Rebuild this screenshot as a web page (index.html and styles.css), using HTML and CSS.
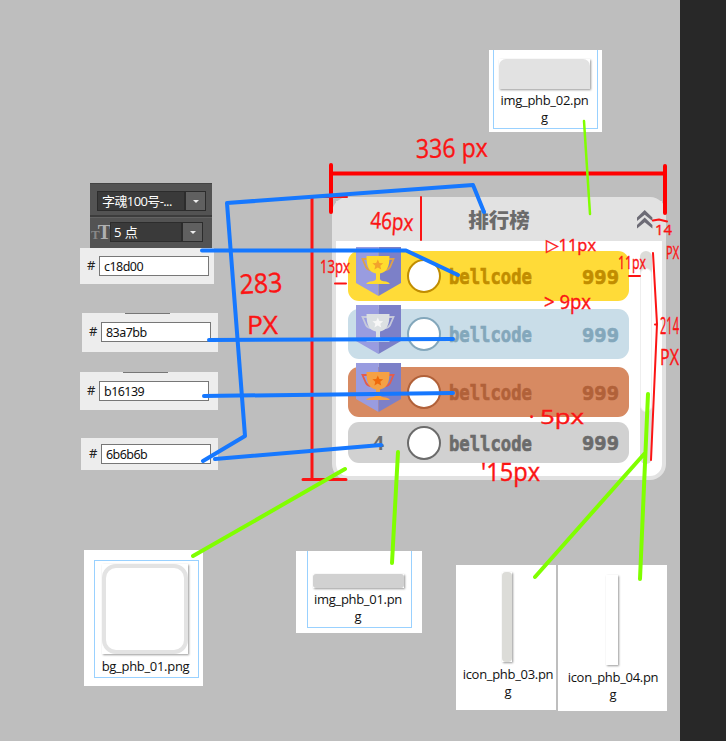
FILE: index.html
```html
<!DOCTYPE html>
<html lang="zh">
<head>
<meta charset="utf-8">
<title>排行榜</title>
<link rel="stylesheet" href="styles.css">
</head>
<body>
<main class="canvas">
  <svg class="defs" width="0" height="0">
    <symbol id="ribbon" viewBox="0 0 45 49">
      <path d="M0 0H22.5V49L0 36Z" fill="#999ce0"/>
      <path d="M22.5 0H45V36L22.5 49Z" fill="#7c80c8"/>
    </symbol>
    <symbol id="cup" viewBox="0 0 45 49">
      <path class="handle" d="M12 12H6.500L10 20Q11.500 23 15 23M32 12H37.500L34 20Q32.500 23 29 23" fill="none" stroke-width="1.800"/>
      <path class="bowl" d="M10.500 9H33.500C33.500 20 31 25 24 26.500V32Q24.500 34 30 34.500Q33 35 34 37H10Q11 35 14 34.500Q19.500 34 20 32V26.500C13 25 10.500 20 10.500 9Z"/>
      <path class="star" d="M21.800 12.500L23.400 16L27.200 16.300L24.300 18.800L25.200 22.500L21.800 20.500L18.400 22.500L19.300 18.800L16.400 16.300L20.200 16Z"/>
    </symbol>
  </svg>

  <section class="type-options">
    <div class="option"><span class="field font-name">字魂100号-...</span><span class="drop"></span></div>
    <div class="option size"><span class="tt"><small>T</small>T</span><span class="field">5 点</span><span class="drop"></span></div>
  </section>

  <div class="hex hex-gold"><span>#</span><b>c18d00</b></div>
  <div class="hex hex-blue"><span>#</span><b>83a7bb</b></div>
  <div class="hex hex-rust"><span>#</span><b>b16139</b></div>
  <div class="hex hex-grey"><span>#</span><b>6b6b6b</b></div>

  <section class="panel">
    <header class="head"><h1>排行榜</h1>
      <svg class="chevrons" width="16" height="19" viewBox="0 0 16 19"><path d="M0 7.500L7.700 0L15.400 7.500V11L7.700 4.800L0 11ZM0 15L7.700 7.500L15.400 15V18.500L7.700 12.300L0 18.500Z" fill="#6c6b75"/></svg>
    </header>
    <div class="body">
      <div class="rows">
        <div class="row gold">
          <svg class="medal" width="45" height="49"><use href="#ribbon"/><use href="#cup"/></svg><i class="avatar"></i>
          <svg class="label" width="180" height="26"><text x="0" y="20" font-size="22" textLength="83" lengthAdjust="spacingAndGlyphs">bellcode</text><text x="133" y="20" font-size="20" textLength="37" lengthAdjust="spacingAndGlyphs">999</text></svg>
        </div>
        <div class="row silver">
          <svg class="medal" width="45" height="49"><use href="#ribbon"/><use href="#cup"/></svg><i class="avatar"></i>
          <svg class="label" width="180" height="26"><text x="0" y="20" font-size="22" textLength="83" lengthAdjust="spacingAndGlyphs">bellcode</text><text x="133" y="20" font-size="20" textLength="37" lengthAdjust="spacingAndGlyphs">999</text></svg>
        </div>
        <div class="row bronze">
          <svg class="medal" width="45" height="49"><use href="#ribbon"/><use href="#cup"/></svg><i class="avatar"></i>
          <svg class="label" width="180" height="26"><text x="0" y="20" font-size="22" textLength="83" lengthAdjust="spacingAndGlyphs">bellcode</text><text x="133" y="20" font-size="20" textLength="37" lengthAdjust="spacingAndGlyphs">999</text></svg>
        </div>
        <div class="row plain">
          <span class="rank">4</span><i class="avatar"></i>
          <svg class="label" width="180" height="26"><text x="0" y="20" font-size="22" textLength="83" lengthAdjust="spacingAndGlyphs">bellcode</text><text x="133" y="19" font-size="20" textLength="37" lengthAdjust="spacingAndGlyphs">999</text></svg>
        </div>
      </div>
      <div class="track"><div class="thumb"></div></div>
    </div>
  </section>

  <figure class="file file-head"><div class="frame"><div class="thumbnail"><i></i></div><figcaption>img_phb_02.pn<br>g</figcaption></div></figure>
  <figure class="file file-bg"><div class="frame"><div class="thumbnail"><i></i></div><figcaption>bg_phb_01.png</figcaption></div></figure>
  <figure class="file file-row"><div class="frame"><div class="thumbnail"><i></i></div><figcaption>img_phb_01.pn<br>g</figcaption></div></figure>
  <figure class="file file-track"><div class="thumbnail"><i></i></div><figcaption>icon_phb_03.pn<br>g</figcaption></figure>
  <figure class="file file-thumb"><div class="thumbnail"><i></i></div><figcaption>icon_phb_04.pn<br>g</figcaption></figure>

  <svg class="notes" width="680" height="741" viewBox="0 0 680 741">
    <g class="red">
      <path class="thick" d="M331 173.500H665M331 165V212M665 166V213"/>
      <path class="mid" d="M312 197V478M303 479.500H346"/>
      <path d="M300 197H347M421 197V240M335 283.500H346M629 276H640M653 220.500L659 219.500L667 221.500M653 253L657 324L651 460M655 324.500H657"/>
    </g>
    <g class="blue">
      <path d="M202 250.500H406L458 275"/>
      <path d="M209 340L453 339"/>
      <path d="M204 396L453 393"/>
      <path d="M484 212L473 185L227 203L245 436L203 461"/>
      <path d="M215 459L381 445"/>
    </g>
    <g class="green">
      <path d="M193 556L345 469M398 452L392 563M645 453L535 577M648 394L640 579"/>
      <path class="fine" d="M584 121L590 214"/>
    </g>
    <g class="ink">
      <text x="416" y="158" font-size="26" textLength="72" lengthAdjust="spacingAndGlyphs" transform="rotate(-1 416 158)">336 px</text>
      <text x="370" y="228" font-size="23" textLength="43" lengthAdjust="spacingAndGlyphs" transform="rotate(4 370 228)">46px</text>
      <text x="240" y="294" font-size="27" textLength="43" lengthAdjust="spacingAndGlyphs" transform="rotate(-3 240 294)">283</text>
      <text x="247" y="334" font-size="25" textLength="31" lengthAdjust="spacingAndGlyphs">PX</text>
      <text x="320" y="273" font-size="18" textLength="30" lengthAdjust="spacingAndGlyphs">13px</text>
      <text x="546" y="251" font-size="17" textLength="50" lengthAdjust="spacingAndGlyphs">▷11px</text>
      <text x="618" y="269" font-size="19" textLength="28" lengthAdjust="spacingAndGlyphs">11px</text>
      <text x="544" y="309" font-size="20" textLength="47" lengthAdjust="spacingAndGlyphs">&gt; 9px</text>
      <text x="529" y="424" font-size="20"><tspan>·</tspan><tspan x="540" textLength="44" lengthAdjust="spacingAndGlyphs">5px</tspan></text>
      <text x="481" y="481" font-size="25" textLength="59" lengthAdjust="spacingAndGlyphs">'15px</text>
      <text x="655" y="235" font-size="15" textLength="17" lengthAdjust="spacingAndGlyphs">14</text>
      <text x="666" y="259" font-size="18" textLength="13" lengthAdjust="spacingAndGlyphs">PX</text>
      <text x="660" y="334" font-size="24" textLength="19" lengthAdjust="spacingAndGlyphs">214</text>
      <text x="660" y="365" font-size="22" textLength="19" lengthAdjust="spacingAndGlyphs">PX</text>
    </g>
  </svg>
</main>
</body>
</html>
```
FILE: styles.css
```css
* { box-sizing: border-box; }
body { margin: 0; background: #282828; }
.canvas { position: relative; width: 680px; height: 741px; background: #bebebe; font-family: "Open Sans", "Noto Sans CJK SC", sans-serif; overflow: hidden; }
.defs { position: absolute; }

/* Character options */
.type-options { position: absolute; left: 90px; top: 183px; width: 122px; height: 65px; padding-top: 7px; background: #535353; color: #fff; border-top: 1px solid #444; }
.option { display: flex; height: 20px; margin-left: 7px; width: 109px; font: 13px/19px "Open Sans", "Noto Sans CJK SC", sans-serif; }
.option.size { position: relative; margin: 11px 0 0 1px; width: 112px; }
.option.size::before { content: ""; position: absolute; left: -1px; top: -7px; width: 122px; height: 2px; background: #3c3c3c; border-bottom: 1px solid #626262; }
.field { flex: 1; padding-left: 4px; background: #3a3a3a; border: 1px solid #2c2c2c; line-height: 18px; white-space: nowrap; letter-spacing: -.6px; }
.size .field { padding-left: 3px; letter-spacing: 0; }
.tt { width: 19px; flex: none; font: bold 20px/20px "Liberation Serif", serif; color: #b0b0b0; white-space: nowrap; letter-spacing: -2px; }
.tt small { font-size: 13px; color: #888; }
.drop { width: 21px; background: #606060; border: 1px solid #2c2c2c; display: flex; align-items: center; justify-content: center; }
.drop::before { content: ""; border: 3px solid transparent; border-top-color: #eee; border-bottom: 0; }

/* Colour values */
.hex { position: absolute; display: flex; background: #ededed; font: 13px/18px "Noto Sans", sans-serif; color: #222; }
.hex span { width: 12px; }
.hex b { width: 110px; height: 20px; padding-left: 4px; background: #fff; border: 1px solid #777; font-weight: 400; font-size: 12.500px; line-height: 19px; letter-spacing: -.55px; color: #111; }
.hex-gold { left: 80px; top: 248px; width: 134px; height: 36px; padding: 8px 0 0 7px; }
.hex-blue { left: 82px; top: 313px; width: 136px; height: 39px; padding: 9px 0 0 7px; }
.hex-rust { left: 80px; top: 372px; width: 138px; height: 38px; padding: 9px 0 0 7px; }
.hex-grey { left: 81px; top: 438px; width: 137px; height: 32px; padding: 6px 0 0 8px; }
.hex-blue::before, .hex-rust::before { content: ""; position: absolute; left: 43px; top: 0; width: 45px; height: 1px; background: #777; }

/* Leaderboard */
.panel { position: absolute; left: 332px; top: 197px; width: 334px; height: 283px; border: 4px solid #e2e2e2; border-radius: 16px; background: #fff; }
.head { position: relative; height: 40px; background: #e2e2e2; display: flex; justify-content: center; }
.head h1 { margin: 0; font: 900 20.500px/36px "Noto Sans CJK SC", sans-serif; color: #6b6b6b; }
.chevrons { position: absolute; right: 9px; top: 9px; }
.body { display: flex; padding: 10px 9px 0 12px; gap: 11px; }
.rows { width: 281px; }
.row { display: flex; align-items: center; height: 50px; margin-bottom: 8px; padding-left: 8px; border-radius: 11px; background: var(--bg); color: var(--ink); }
.gold { --bg: #ffdb38; --ink: #c18d00; --bowl: #ffdc2e; --star: #f2a32c; --handle: #dfa04a; }
.silver { --bg: #c9dde8; --ink: #83a7bb; --bowl: #dce0e2; --star: #f7f7f7; --handle: #c6c9da; }
.bronze { --bg: #d78a62; --ink: #b16139; --bowl: #f5a144; --star: #f06a0c; --handle: #e35d4d; margin-bottom: 5px; }
.plain { --bg: #d1d1d1; --ink: #6b6b6b; height: 41px; }
.medal { margin-top: -4px; align-self: flex-start; flex: none; }
.bowl { fill: var(--bowl); }
.star { fill: var(--star); }
.handle { stroke: var(--handle); }
.avatar { width: 34px; height: 34px; margin: 0 8px 0 6px; border: 2px solid var(--ink); border-radius: 50%; background: #fff; flex: none; }
.label { flex: none; margin-top: 2px; font-family: "DejaVu Sans Mono", monospace; font-weight: 700; fill: var(--ink); stroke: var(--ink); stroke-width: .7px; overflow: visible; }
.rank { width: 45px; text-align: center; font: bold 20px/20px "DejaVu Sans Mono", monospace; }
.track { width: 12px; height: 213px; padding-top: 17px; border-radius: 6px; background: #dcdcd8; }
.thumb { height: 144px; border-radius: 6px; border: 1px solid #eee; background: #fff; }

/* Asset files */
.file { position: absolute; margin: 0; background: #fff; display: flex; flex-direction: column; align-items: center; font-size: 13px; line-height: 17px; letter-spacing: -.3px; text-align: center; color: #111; }
.frame { display: flex; flex-direction: column; align-items: center; border: 1px solid #99d1ff; }
.thumbnail { background: #fff; box-shadow: 1px 1px 2px #999; }
.thumbnail i { display: block; width: 100%; height: 100%; }
.file-head { left: 489px; top: 50px; width: 113px; height: 82px; }
.file-head .frame { width: 105px; height: 79px; border-top: 0; padding: 9px 2px 0 0; }
.file-head .thumbnail { width: 91px; height: 30px; margin-bottom: 3px; }
.file-head i { background: #e2e2e2; border-radius: 7px 7px 0 0; }
.file-bg { left: 84px; top: 550px; width: 119px; height: 136px; padding: 10px 0 0 6px; }
.file-bg .frame { width: 105px; height: 118px; padding: 3px 2px 0 0; }
.file-bg .thumbnail { width: 86px; height: 90px; margin: 0 2px 4px 0; }
.file-bg i { border: 4px solid #e3e3e3; border-radius: 14px; }
.file-row { left: 296px; top: 551px; width: 126px; height: 82px; }
.file-row .frame { width: 105px; height: 77px; border-top: 0; padding: 23px 2px 0 0; }
.file-row .thumbnail { width: 91px; height: 14px; margin-bottom: 3px; }
.file-row i { background: #d1d1d1; border-radius: 3px; }
.file-track { left: 456px; top: 565px; width: 100px; height: 145px; padding: 7px 0 0 4px; }
.file-track .thumbnail { width: 10px; height: 90px; margin: 0 3px 4px 0; }
.file-track i { background: #dcdcd8; border-radius: 4px; }
.file-thumb { left: 558px; top: 565px; width: 109px; height: 146px; padding: 10px 0 0 1px; }
.file-thumb .thumbnail { width: 12px; height: 90px; margin: 0 3px 4px 0; }

/* Measurements and connectors */
.notes { position: absolute; left: 0; top: 0; }
.notes path { fill: none; stroke-linecap: round; stroke-linejoin: round; }
.red path { stroke: #fb1414; stroke-width: 2; }
.red .thick { stroke: #f00; stroke-width: 4; }
.red .mid { stroke-width: 3; }
.blue path { stroke: #1678ff; stroke-width: 4; }
.green path { stroke: #80ff00; stroke-width: 4; }
.green .fine { stroke-width: 2.500; }
.ink text { fill: #fb1414; stroke: #fb1414; stroke-width: .4px; font-family: "Open Sans", "DejaVu Sans", sans-serif; font-weight: 500; }
```
